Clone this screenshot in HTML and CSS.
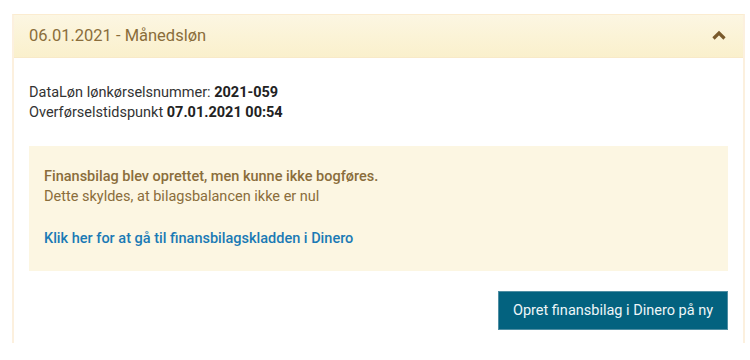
FILE: index.html
```html
<!DOCTYPE html>
<html lang="da">
<head>
<meta charset="utf-8">
<link rel="stylesheet" href="styles.css">
</head>
<body>
<div class="panel">
  <div class="panel-heading">
    <span class="panel-title">06.01.2021 - Månedsløn</span>
    <svg class="chevron" width="16" height="12" viewBox="0 0 16 12"><polyline points="2.5,9.5 8,4 13.5,9.5" fill="none" stroke="#7a5a2c" stroke-width="3.2"/></svg>
  </div>
  <div class="panel-body">
    <div class="info">
      <div>DataLøn lønkørselsnummer: <b>2021-059</b></div>
      <div>Overførselstidspunkt <b>07.01.2021 00:54</b></div>
    </div>
    <div class="alert">
      <div class="alert-title">Finansbilag blev oprettet, men kunne ikke bogføres.</div>
      <div class="alert-text">Dette skyldes, at bilagsbalancen ikke er nul</div>
      <a class="alert-link" href="#">Klik her for at gå til finansbilagskladden i Dinero</a>
    </div>
    <div class="actions">
      <button class="btn">Opret finansbilag i Dinero på ny</button>
    </div>
  </div>
</div>
</body>
</html>
```
FILE: styles.css
```css
html, body {
  margin: 0;
  padding: 0;
  background: #fff;
}
body {
  font-family: Roboto, "Liberation Sans", sans-serif;
  font-size: 14.5px;
  color: #333;
  padding: 14px 0 0 12px;
}
.panel {
  width: 733px;
  border: 2px solid #fcf0de;
  border-top: 1px solid #fbecd0;
  border-bottom: none;
  height: 329px;
  box-sizing: border-box;
}
.panel-heading {
  display: flex;
  align-items: center;
  justify-content: space-between;
  height: 43px;
  box-sizing: border-box;
  padding: 0 16px 0 15px;
  background: linear-gradient(to bottom, #fcf6e2, #faf0cc);
  border-bottom: 1px solid #f8e9c8;
}
.panel-title {
  font-size: 16.5px;
  color: #8a6d3b;
  line-height: 24px;
}
.chevron {
  display: block;
  margin-top: -2px;
}
.panel-body {
  padding: 25px 15px 0 15px;
}
.info {
  line-height: 20px;
}
.info b {
  font-weight: 700;
  color: #222;
}
.alert {
  margin-top: 23px;
  background: #fcf6e2;
  padding: 21px 15px 22px 15px;
  line-height: 20px;
  color: #8a6d3b;
}
.alert-title {
  font-weight: 500;
}
.alert-text {
  margin-bottom: 22px;
}
.alert-link {
  color: #1a7ab5;
  font-weight: 500;
  text-decoration: none;
}
.actions {
  display: flex;
  justify-content: flex-end;
  margin-top: 20px;
}
.btn {
  font-family: Roboto, "Liberation Sans", sans-serif;
  font-size: 14.5px;
  color: #eef6f8;
  background: #03627f;
  border: 1px solid #4f8ea3;
  height: 39px;
  width: 230px;
  padding: 0;
  cursor: pointer;
}
```
